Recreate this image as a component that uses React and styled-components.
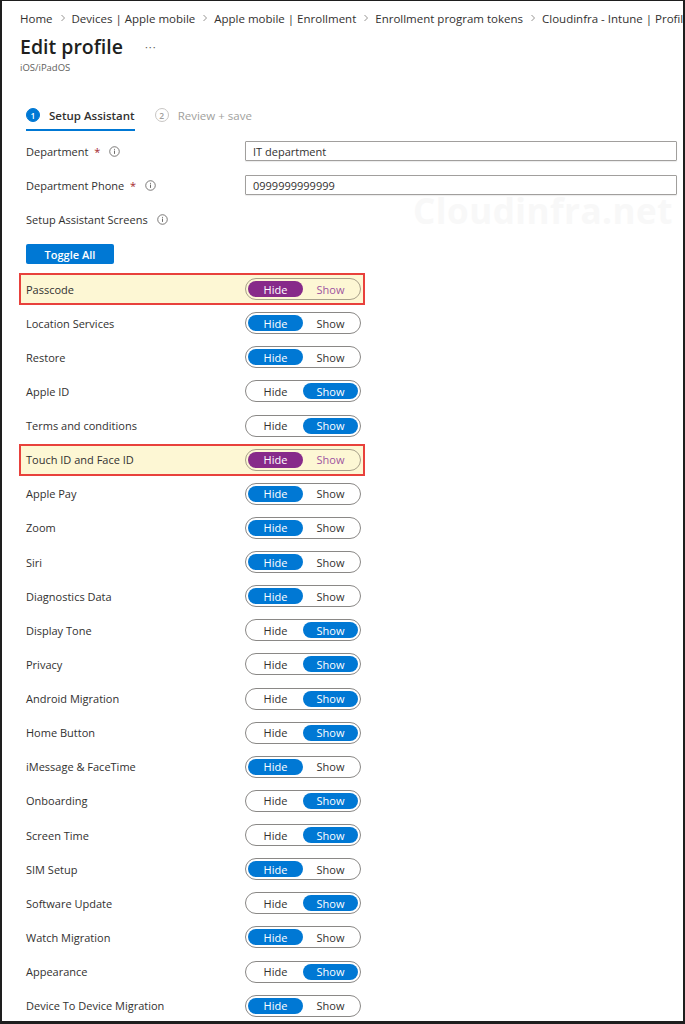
import styled, { createGlobalStyle } from "styled-components";

const GlobalStyle = createGlobalStyle`
  html, body {
    margin: 0;
    padding: 0;
    background: #ffffff;
  }
  * {
    box-sizing: border-box;
  }
`;

const crumbs = [
  "Home",
  "Devices | Apple mobile",
  "Apple mobile | Enrollment",
  "Enrollment program tokens",
  "Cloudinfra - Intune | Profiles",
];

const screens = [
  ["Passcode", "hide", true],
  ["Location Services", "hide"],
  ["Restore", "hide"],
  ["Apple ID", "show"],
  ["Terms and conditions", "show"],
  ["Touch ID and Face ID", "hide", true],
  ["Apple Pay", "hide"],
  ["Zoom", "hide"],
  ["Siri", "hide"],
  ["Diagnostics Data", "hide"],
  ["Display Tone", "show"],
  ["Privacy", "show"],
  ["Android Migration", "show"],
  ["Home Button", "show"],
  ["iMessage & FaceTime", "hide"],
  ["Onboarding", "show"],
  ["Screen Time", "show"],
  ["SIM Setup", "hide"],
  ["Software Update", "show"],
  ["Watch Migration", "hide"],
  ["Appearance", "show"],
  ["Device To Device Migration", "hide"],
];

function InfoIcon() {
  return (
    <Info viewBox="0 0 12 12">
      <circle cx="6" cy="6" r="5.2" fill="none" stroke="#605e5c" strokeWidth="0.9" />
      <rect x="5.5" y="5" width="1" height="3.6" fill="#605e5c" />
      <circle cx="6" cy="3.6" r="0.6" fill="#605e5c" />
    </Info>
  );
}

function Chevron() {
  return (
    <Sep viewBox="0 0 6 8">
      <path d="M1.5 1 L4.5 4 L1.5 7" fill="none" stroke="#8a8886" strokeWidth="0.9" />
    </Sep>
  );
}

function Toggle({ value, marked }) {
  return (
    <ToggleBox $marked={marked}>
      <Half $on={value === "hide"} $marked={marked}>Hide</Half>
      <Half $on={value === "show"} $marked={marked}>Show</Half>
    </ToggleBox>
  );
}

export default function App() {
  return (
    <>
      <GlobalStyle />
      <Frame>
        <Watermark>Cloudinfra.net</Watermark>
        <Breadcrumb>
          {crumbs.map((c, i) => (
            <Crumb key={c}>
              {i > 0 && <Chevron />}
              {c}
            </Crumb>
          ))}
        </Breadcrumb>
        <TitleRow>
          <Title>Edit profile</Title>
          <More>···</More>
        </TitleRow>
        <Subtitle>iOS/iPadOS</Subtitle>

        <Tabs>
          <Tab $active>
            <StepNum $active>1</StepNum>
            Setup Assistant
          </Tab>
          <Tab>
            <StepNum>2</StepNum>
            Review + save
          </Tab>
        </Tabs>

        <Form>
          <Row>
            <Label>
              Department <Req>*</Req>
              <InfoIcon />
            </Label>
            <Input>IT department</Input>
          </Row>
          <Row>
            <Label>
              Department Phone <Req>*</Req>
              <InfoIcon />
            </Label>
            <Input>0999999999999</Input>
          </Row>
          <Row>
            <Label>
              Setup Assistant Screens
              <InfoIcon />
            </Label>
          </Row>
          <Button>Toggle All</Button>

          <List>
            {screens.map(([name, value, marked]) => (
              <ScreenRow key={name} $marked={marked}>
                <Label>{name}</Label>
                <Toggle value={value} marked={marked} />
              </ScreenRow>
            ))}
          </List>
        </Form>
      </Frame>
    </>
  );
}

const Frame = styled.div`
  position: relative;
  width: 685px;
  height: 1024px;
  overflow: hidden;
  border-style: solid;
  border-color: #1e1e1e;
  border-width: 1px 2px 3px 2px;
  background: #ffffff;
  font-family: "Open Sans", "Noto Sans", sans-serif;
  color: #323130;
`;

const Watermark = styled.div`
  position: absolute;
  left: 411px;
  top: 186px;
  font-family: "Open Sans", sans-serif;
  font-weight: 700;
  font-size: 35px;
  letter-spacing: 0.5px;
  color: #f8f8f8;
  pointer-events: none;
`;

const Breadcrumb = styled.div`
  display: flex;
  align-items: center;
  white-space: nowrap;
  padding: 7px 0 0 18px;
  height: 27px;
  font-size: 11.5px;
`;

const Crumb = styled.span`
  display: flex;
  align-items: center;
`;

const Sep = styled.svg`
  width: 6px;
  height: 8px;
  margin: 0 6px 0 7px;
`;

const TitleRow = styled.div`
  display: flex;
  align-items: center;
  padding-left: 18px;
  height: 40px;
  margin-top: -2px;
`;

const Title = styled.h1`
  margin: 0;
  font-size: 19.5px;
  font-weight: 600;
  color: #201f1e;
`;

const More = styled.span`
  margin-left: 22px;
  font-size: 11px;
  color: #605e5c;
  letter-spacing: 1px;
`;

const Subtitle = styled.div`
  padding-left: 18px;
  margin-top: -5px;
  font-size: 9.5px;
  color: #605e5c;
`;

const Tabs = styled.div`
  display: flex;
  gap: 20px;
  padding-left: 24px;
  margin-top: 29px;
`;

const Tab = styled.div`
  display: flex;
  align-items: center;
  gap: 9px;
  height: 28px;
  padding-bottom: 2px;
  font-size: 11.5px;
  font-weight: ${(p) => (p.$active ? 600 : 400)};
  color: ${(p) => (p.$active ? "#323130" : "#a19f9d")};
  border-bottom: 2px solid ${(p) => (p.$active ? "#0078d4" : "transparent")};
`;

const StepNum = styled.span`
  display: flex;
  align-items: center;
  justify-content: center;
  width: 14px;
  height: 14px;
  border-radius: 50%;
  font-size: 8.5px;
  font-weight: 600;
  background: ${(p) => (p.$active ? "#0078d4" : "transparent")};
  color: ${(p) => (p.$active ? "#ffffff" : "#a19f9d")};
  border: 1px solid ${(p) => (p.$active ? "#0078d4" : "#c8c6c4")};
`;

const Form = styled.div`
  padding: 3px 0 0 24px;
`;

const Row = styled.div`
  display: flex;
  align-items: center;
  height: 34px;
`;

const Label = styled.div`
  display: flex;
  align-items: center;
  width: 219px;
  flex-shrink: 0;
  font-size: 11px;
  white-space: pre;
  color: #323130;
`;

const Req = styled.span`
  color: #a4262c;
  margin-left: 3px;
`;

const Info = styled.svg`
  width: 11px;
  height: 11px;
  margin-left: 9px;
`;

const Input = styled.div`
  display: flex;
  align-items: center;
  width: 432px;
  height: 20px;
  padding-left: 7px;
  font-size: 11px;
  border: 1px solid #a19f9d;
  border-radius: 1px;
  box-shadow: 0 1px 1px rgba(0, 0, 0, 0.08);
  color: #323130;
`;

const Button = styled.div`
  display: flex;
  align-items: center;
  justify-content: center;
  width: 88px;
  height: 20px;
  margin: 8px 0 8px;
  background: #0078d4;
  border-radius: 2px;
  color: #ffffff;
  font-size: 11px;
  font-weight: 600;
`;

const List = styled.div`
  display: flex;
  flex-direction: column;
`;

const ScreenRow = styled.div`
  display: flex;
  align-items: center;
  height: 34.14px;
  ${(p) =>
    p.$marked &&
    `
    width: 346px;
    height: 32.14px;
    margin: 1px 0 1px -7px;
    padding: 0 2px 0 5px;
    border: 2px solid #e8413c;
    background: #fdf7d4;
  `}
`;

const ToggleBox = styled.div`
  display: flex;
  align-items: center;
  width: 116px;
  height: 22px;
  padding: 0 2px;
  border: 1px solid ${(p) => (p.$marked ? "#a8a08a" : "#8a8886")};
  border-radius: 11px;
  background: ${(p) => (p.$marked ? "#fdf7d4" : "#ffffff")};
`;

const Half = styled.div`
  flex: 1;
  display: flex;
  align-items: center;
  justify-content: center;
  height: 16px;
  border-radius: 8px;
  font-size: 11px;
  background: ${(p) => (p.$on ? (p.$marked ? "#872a8a" : "#0078d4") : "transparent")};
  color: ${(p) => (p.$on ? "#ffffff" : p.$marked ? "#9d55a0" : "#323130")};
`;
